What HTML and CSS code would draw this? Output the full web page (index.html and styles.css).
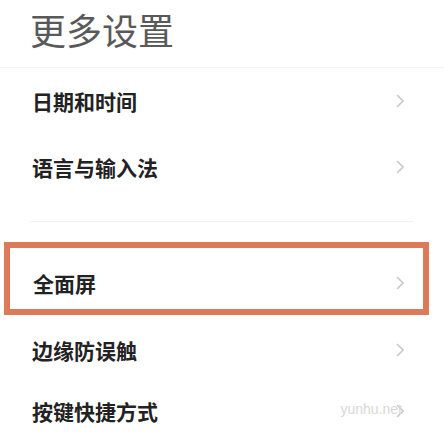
FILE: index.html
```html
<!DOCTYPE html>
<html lang="zh-CN">
<head>
    <meta charset="UTF-8">
    <meta name="viewport" content="width=device-width, initial-scale=1.0">
    <title>更多设置</title>
    <link rel="stylesheet" href="styles.css">
</head>
<body>
    <div class="pagina">
        <h1 class="titulo">更多设置</h1>
        <div class="grupo">
            <div class="item">
                <span>日期和时间</span>
                <svg class="seta" width="8" height="14" viewBox="0 0 8 14"><polyline points="1,1 7,7 1,13" fill="none" stroke="#c9c9c9" stroke-width="1.6"/></svg>
            </div>
            <div class="item">
                <span>语言与输入法</span>
                <svg class="seta" width="8" height="14" viewBox="0 0 8 14"><polyline points="1,1 7,7 1,13" fill="none" stroke="#c9c9c9" stroke-width="1.6"/></svg>
            </div>
        </div>
        <div class="separador"></div>
        <div class="grupo">
            <div class="item destaque">
                <span>全面屏</span>
                <svg class="seta" width="8" height="14" viewBox="0 0 8 14"><polyline points="1,1 7,7 1,13" fill="none" stroke="#c9c9c9" stroke-width="1.6"/></svg>
            </div>
            <div class="item">
                <span>边缘防误触</span>
                <svg class="seta" width="8" height="14" viewBox="0 0 8 14"><polyline points="1,1 7,7 1,13" fill="none" stroke="#c9c9c9" stroke-width="1.6"/></svg>
            </div>
            <div class="item ultimo">
                <span>按键快捷方式</span>
                <svg class="seta" width="8" height="14" viewBox="0 0 8 14"><polyline points="1,1 7,7 1,13" fill="none" stroke="#c9c9c9" stroke-width="1.6"/></svg>
                <span class="marca">yunhu.net</span>
            </div>
        </div>
    </div>
</body>
</html>
```

FILE: styles.css
```css
body {
    margin: 0;
    background-color: #fff;
    font-family: "Noto Sans CJK SC", "Noto Sans", sans-serif;
}

.pagina {
    width: 444px;
    height: 441px;
    overflow: hidden;
}

.titulo {
    margin: 0;
    height: 68px;
    padding-left: 30px;
    font-size: 36px;
    line-height: 58px;
    font-weight: 400;
    color: #595959;
    border-bottom: 1px solid #f5f5f5;
    box-sizing: border-box;
}

.item {
    position: relative;
    display: flex;
    align-items: center;
    justify-content: space-between;
    height: 66px;
    padding: 0 40px 0 32px;
    font-size: 21px;
    font-weight: bold;
    color: #222;
    box-sizing: border-box;
}

.separador {
    height: 42px;
    margin: 0 30px;
    box-sizing: border-box;
    border-bottom: 1px solid #f2f2f2;
    transform: translateY(-20px);
}

.destaque {
    width: 425px;
    height: 73px;
    margin-left: 4px;
    padding: 9px 19px 0 23px;
    border: 6px solid #dd7a5a;
    margin-bottom: 2px;
}

.item.ultimo {
    height: 64px;
    margin-top: -4px;
}

.marca {
    position: absolute;
    right: 42px;
    top: 22px;
    font-family: "Liberation Sans", sans-serif;
    font-size: 14px;
    font-weight: normal;
    color: #d8d8d8;
}
```
